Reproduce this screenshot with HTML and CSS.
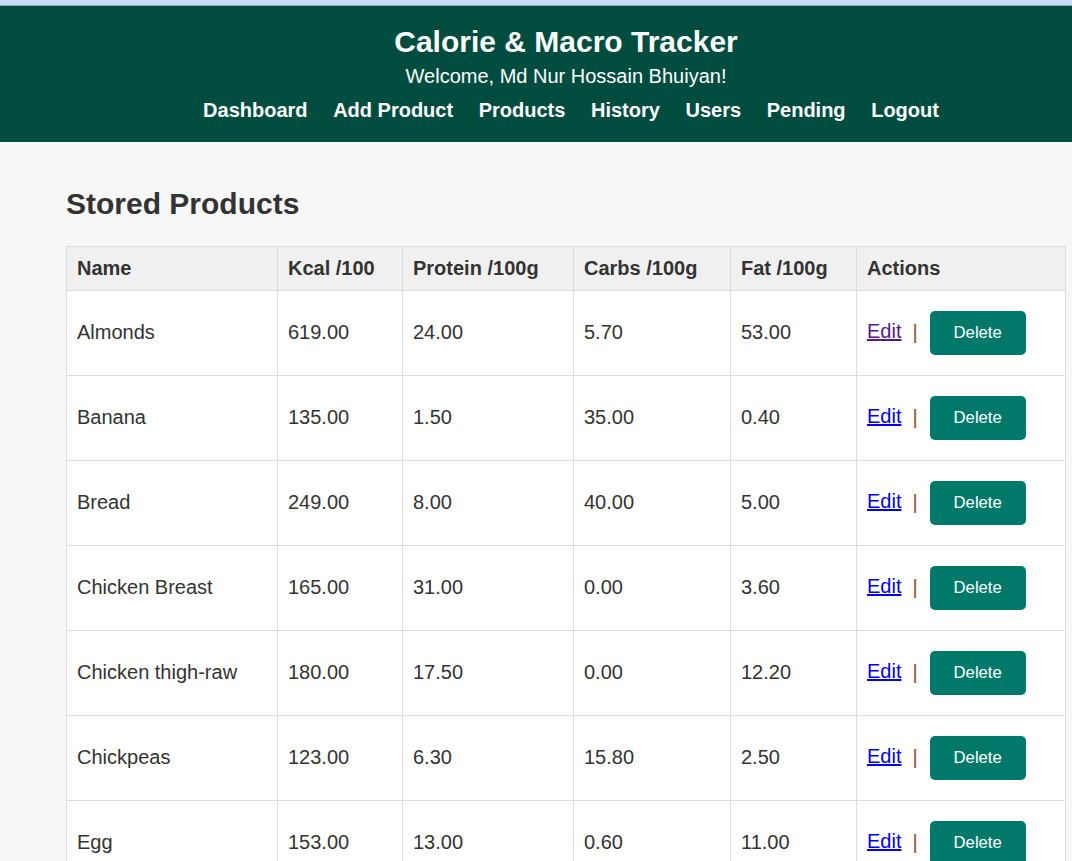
FILE: index.html
```html
<!DOCTYPE html>
<html lang="en">
<head>
<meta charset="utf-8">
<title>Calorie &amp; Macro Tracker</title>
<link rel="stylesheet" href="styles.css">
</head>
<body>
<div class="page">
  <div class="topstrip"></div>
  <header class="site-header">
    <h1 class="site-title">Calorie &amp; Macro Tracker</h1>
    <p class="welcome">Welcome, Md Nur Hossain Bhuiyan!</p>
    <nav class="nav">
      <a href="#">Dashboard</a>
      <a href="#">Add Product</a>
      <a href="#">Products</a>
      <a href="#">History</a>
      <a href="#">Users</a>
      <a href="#">Pending</a>
      <a href="#">Logout</a>
    </nav>
  </header>
  <main class="container">
    <h2 class="section-title">Stored Products</h2>
    <table class="products">
      <colgroup>
        <col class="c-name"><col class="c-kcal"><col class="c-prot"><col class="c-carb"><col class="c-fat"><col class="c-act">
      </colgroup>
      <thead>
        <tr><th>Name</th><th>Kcal /100</th><th>Protein /100g</th><th>Carbs /100g</th><th>Fat /100g</th><th>Actions</th></tr>
      </thead>
      <tbody>
        <tr><td>Almonds</td><td>619.00</td><td>24.00</td><td>5.70</td><td>53.00</td><td class="act-cell"><div class="actions"><a href="#" class="edit visited">Edit</a><span class="sep">|</span><button class="delete">Delete</button></div></td></tr>
        <tr><td>Banana</td><td>135.00</td><td>1.50</td><td>35.00</td><td>0.40</td><td class="act-cell"><div class="actions"><a href="#" class="edit">Edit</a><span class="sep">|</span><button class="delete">Delete</button></div></td></tr>
        <tr><td>Bread</td><td>249.00</td><td>8.00</td><td>40.00</td><td>5.00</td><td class="act-cell"><div class="actions"><a href="#" class="edit">Edit</a><span class="sep">|</span><button class="delete">Delete</button></div></td></tr>
        <tr><td>Chicken Breast</td><td>165.00</td><td>31.00</td><td>0.00</td><td>3.60</td><td class="act-cell"><div class="actions"><a href="#" class="edit">Edit</a><span class="sep">|</span><button class="delete">Delete</button></div></td></tr>
        <tr><td>Chicken thigh-raw</td><td>180.00</td><td>17.50</td><td>0.00</td><td>12.20</td><td class="act-cell"><div class="actions"><a href="#" class="edit">Edit</a><span class="sep">|</span><button class="delete">Delete</button></div></td></tr>
        <tr><td>Chickpeas</td><td>123.00</td><td>6.30</td><td>15.80</td><td>2.50</td><td class="act-cell"><div class="actions"><a href="#" class="edit">Edit</a><span class="sep">|</span><button class="delete">Delete</button></div></td></tr>
        <tr><td>Egg</td><td>153.00</td><td>13.00</td><td>0.60</td><td>11.00</td><td class="act-cell"><div class="actions"><a href="#" class="edit">Edit</a><span class="sep">|</span><button class="delete">Delete</button></div></td></tr>
      </tbody>
    </table>
  </main>
</div>
</body>
</html>
```

FILE: styles.css
```css
html, body {
  margin: 0;
  padding: 0;
  overflow: hidden;
  background: #f7f7f7;
}

body {
  font-family: "Liberation Sans", Arial, sans-serif;
  font-size: 20px;
  color: #333;
}

.page {
  background: #f7f7f7;
}

.topstrip {
  height: 5px;
  background: #c9dbf5;
  border-bottom: 1px solid #8fa6b8;
}

.site-header {
  background: #004d40;
  color: #fff;
  text-align: center;
  padding: 19px 0 20px 60px;
}

.site-title {
  margin: 0;
  font-size: 30px;
  line-height: 34px;
  font-weight: bold;
}

.welcome {
  margin: 6px 0 0;
  font-size: 20px;
  line-height: 23px;
}

.nav {
  margin-top: 11px;
  padding-left: 10px;
  display: flex;
  justify-content: center;
  gap: 25.6px;
  line-height: 23px;
}

.nav a {
  color: #fff;
  font-weight: bold;
  text-decoration: none;
  font-size: 20px;
}

.container {
  width: 1000px;
  margin-left: 66px;
  padding-top: 44px;
}

.section-title {
  margin: 0 0 25px;
  font-size: 30px;
  line-height: 35px;
  font-weight: bold;
  color: #333;
}

.products {
  width: 1000px;
  table-layout: fixed;
  border-collapse: collapse;
  background: #fff;
}

.c-name { width: 211px; }
.c-kcal { width: 125px; }
.c-prot { width: 171px; }
.c-carb { width: 157px; }
.c-fat { width: 126px; }
.c-act { width: 209px; }

.products th,
.products td {
  border: 1px solid #ddd;
  text-align: left;
  padding: 10px;
  line-height: 23px;
  vertical-align: middle;
  white-space: nowrap;
}

.products th {
  background: #f0f0f0;
  font-weight: bold;
}

.products td {
  padding: 19px 10px 21px;
}

.products td.act-cell {
  padding: 20px 10px;
  height: 44px;
}

.actions {
  display: flex;
  align-items: center;
}

.edit {
  color: #0000ee;
  text-decoration: underline;
  margin-top: -3px;
}

.edit.visited {
  color: #551a8b;
}

.sep {
  margin: -2px 12px 0 11px;
  color: #8a5030;
}

.delete {
  background: #00796b;
  color: #fff;
  border: none;
  border-radius: 5px;
  font-family: "Liberation Sans", Arial, sans-serif;
  font-size: 16.67px;
  width: 96px;
  height: 44px;
  padding: 0;
  cursor: pointer;
}
```
